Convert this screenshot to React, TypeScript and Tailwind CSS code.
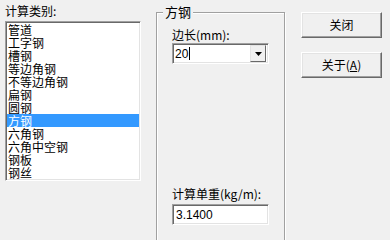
import React from 'react';

const items = [
  '管道',
  '工字钢',
  '槽钢',
  '等边角钢',
  '不等边角钢',
  '扁钢',
  '圆钢',
  '方钢',
  '六角钢',
  '六角中空钢',
  '钢板',
  '钢丝',
];

const sunken =
  'border border-t-[#a0a0a0] border-l-[#a0a0a0] border-r-white border-b-white shadow-[inset_1px_1px_0_#696969,inset_-1px_-1px_0_#e3e3e3]';

function Button({ children }: { children: React.ReactNode }) {
  return (
    <button className="w-[81px] h-[26px] bg-[#f0f0f0] border border-t-white border-l-white border-r-[#696969] border-b-[#696969] shadow-[inset_-1px_-1px_0_#a0a0a0,inset_1px_1px_0_#e3e3e3] text-[12px] leading-none text-black">
      {children}
    </button>
  );
}

export default function App() {
  const selected = '方钢';

  return (
    <div className="w-[390px] h-[240px] overflow-hidden bg-[#f0f0f0] text-black font-['Noto_Sans_CJK_SC',sans-serif] text-[12px] flex pl-[5px]">
      {/* left: category list */}
      <div className="w-[136px] flex flex-col pt-[4px]">
        <div className="leading-[13px] h-[17px]">计算类别:</div>
        <div className={`h-[160px] bg-white ${sunken} p-[1px]`}>
          {items.map((it) => (
            <div
              key={it}
              className={`h-[13px] leading-[13px] pl-[1px] ${
                it === selected ? 'bg-[#3399ff] text-white' : ''
              }`}
            >
              {it}
            </div>
          ))}
        </div>
      </div>

      {/* middle: group box */}
      <div className="ml-[15px] mt-[12px] w-[129px] h-[260px] relative border border-[#a0a0a0] shadow-[inset_1px_1px_0_white,1px_1px_0_white]">
        <div className="absolute left-[6px] top-[-8px] px-[2px] bg-[#f0f0f0] leading-[14px] text-[13px]">
          方钢
        </div>
        <div className="flex flex-col pl-[15px] pt-[15px]">
          <div className="leading-[13px] h-[15px]">边长(mm):</div>
          <div className={`w-[97px] h-[21px] bg-white ${sunken} flex items-center`}>
            <div className="flex-1 flex items-center pl-[2px] font-['Liberation_Sans',sans-serif] text-[12px]">
              20
              <span className="w-px h-[13px] bg-black ml-[1px]" />
            </div>
            <div className="w-[16px] h-[17px] mr-[2px] bg-[#f0f0f0] border border-t-[#e3e3e3] border-l-[#e3e3e3] border-r-[#696969] border-b-[#696969] flex items-center justify-center">
              <svg width="7" height="4" viewBox="0 0 7 4">
                <path d="M0 0h7L3.5 4z" fill="black" />
              </svg>
            </div>
          </div>

          <div className="mt-[123px] leading-[13px] h-[17px]">计算单重(kg/m):</div>
          <div className={`w-[97px] h-[21px] bg-white ${sunken} flex items-center pl-[3px] font-['Liberation_Sans',sans-serif] text-[12px]`}>
            3.1400
          </div>
        </div>
      </div>

      {/* right: buttons */}
      <div className="ml-[16px] pt-[12px] flex flex-col gap-[14px]">
        <Button>关闭</Button>
        <Button>
          关于(<span className="underline">A</span>)
        </Button>
      </div>
    </div>
  );
}
